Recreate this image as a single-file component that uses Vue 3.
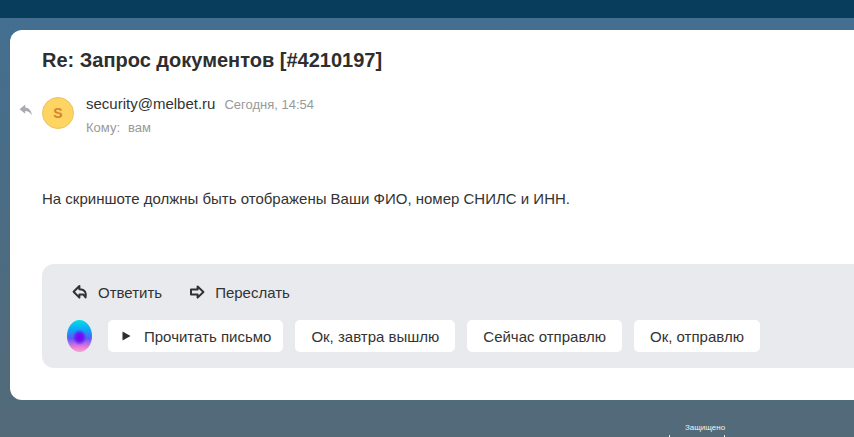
<template>
  <div class="page">
    <div class="topbar"></div>
    <main class="content">
      <section class="letter">
        <h1 class="subject">Re: Запрос документов [#4210197]</h1>

        <div class="meta">
          <svg class="replied" width="14" height="12" viewBox="0 0 14 12">
            <path d="M6.2 0.6 L0.6 5.2 L6.2 9.8 V7 C9 7 11 8 12.8 11.2 C12.6 7 10.2 3.6 6.2 3.4 Z" fill="#a9abb0" />
          </svg>
          <div class="avatar">S</div>
          <div class="meta-text">
            <div class="from-row">
              <span class="from">security@melbet.ru</span>
              <span class="date">Сегодня, 14:54</span>
            </div>
            <div class="to-row">
              <span>Кому:</span>
              <span>вам</span>
            </div>
          </div>
        </div>

        <p class="body-text">На скриншоте должны быть отображены Ваши ФИО, номер СНИЛС и ИНН.</p>

        <div class="actions">
          <div class="action-row">
            <a class="action">
              <svg width="16" height="16" viewBox="0 0 16 16">
                <path d="M7.4 2 L1.6 7.8 L7.4 13.6 V10.4 H11.2 L13.6 13.4 C14.4 9 13.4 5.4 7.4 5.2 Z" fill="none" stroke="#2f3136" stroke-width="2" stroke-linejoin="round" />
              </svg>
              Ответить
            </a>
            <a class="action">
              <svg width="16" height="16" viewBox="0 0 16 16">
                <path d="M8.6 2.4 L14.4 8 L8.6 13.6 V10.6 H2 V5.4 H8.6 Z" fill="none" stroke="#2f3136" stroke-width="2" stroke-linejoin="round" />
              </svg>
              Переслать
            </a>
          </div>
          <div class="reply-row">
            <div class="assistant"></div>
            <button class="chip chip-play">
              <svg width="9" height="10" viewBox="0 0 9 10"><path d="M0.5 0.5 L8.5 5 L0.5 9.5 Z" fill="#2b2d31" /></svg>
              Прочитать письмо
            </button>
            <button v-for="text in quickReplies" :key="text" class="chip">{{ text }}</button>
          </div>
        </div>
      </section>

      <footer class="protected">
        <div class="protected-box">
          <span>Защищено</span>
          <div class="protected-marks"><i></i><i></i></div>
        </div>
      </footer>
    </main>
  </div>
</template>

<script setup>
const quickReplies = ['Ок, завтра вышлю', 'Сейчас отправлю', 'Ок, отправлю']
</script>

<style>
html, body {
  margin: 0;
  overflow: hidden;
}
</style>

<style scoped>
.page {
  width: 854px;
  height: 437px;
  overflow: hidden;
  font-family: "Liberation Sans", Arial, sans-serif;
  background: #4f6a80;
}

.topbar {
  height: 18px;
  background: #083e5c;
}

.content {
  height: 419px;
  padding: 12px 0 0 10px;
  box-sizing: border-box;
  background: linear-gradient(180deg, #446f90 0%, #4d6b80 60%, #536a79 100%);
}

.letter {
  width: 880px;
  height: 370px;
  box-sizing: border-box;
  padding: 18px 0 0 32px;
  background: #fff;
  border-radius: 12px;
}

.subject {
  margin: 0;
  font-size: 20px;
  line-height: 24px;
  font-weight: 700;
  color: #2e2e2e;
}

.meta {
  display: flex;
  align-items: flex-start;
  margin: 22px 0 0 -23px;
}

.replied {
  margin: 10px 9px 0 0;
}

.avatar {
  width: 32px;
  height: 32px;
  margin-top: 3px;
  border-radius: 50%;
  box-sizing: border-box;
  border: 1px solid #eec25e;
  background: #fed462;
  color: #d5832d;
  font-size: 14px;
  font-weight: 700;
  line-height: 30px;
  text-align: center;
}

.meta-text {
  margin-left: 12px;
}

.from-row {
  display: flex;
  align-items: baseline;
  gap: 9px;
  height: 20px;
  line-height: 20px;
}

.from {
  font-size: 15px;
  color: #333;
}

.date {
  font-size: 13px;
  color: #999;
}

.to-row {
  display: flex;
  gap: 8px;
  margin-top: 6px;
  font-size: 13px;
  line-height: 16px;
  color: #999;
}

.body-text {
  margin: 53px 0 0;
  font-size: 15px;
  line-height: 20px;
  color: #333;
}

.actions {
  width: 840px;
  height: 104px;
  box-sizing: border-box;
  margin-top: 55px;
  padding: 18px 0 0 25px;
  background: #e9eaee;
  border-radius: 12px;
}

.action-row {
  display: flex;
  gap: 27px;
  margin-left: 5px;
  height: 20px;
}

.action {
  display: flex;
  align-items: center;
  gap: 10px;
  font-size: 15px;
  color: #333;
}

.reply-row {
  display: flex;
  align-items: center;
  gap: 12px;
  margin-top: 18px;
}

.assistant {
  width: 25px;
  height: 32px;
  margin-right: 4px;
  border-radius: 50%;
  background:
    radial-gradient(ellipse 7px 8px at 50% 54%, #7500f5 0%, rgba(117, 0, 245, 0.8) 50%, rgba(117, 0, 245, 0) 100%),
    linear-gradient(180deg, #05dde8 0%, #0aa8f8 30%, #5a5cf8 58%, #f07ad6 85%, #f4a6d8 100%);
}

.chip {
  height: 32px;
  padding: 0 16px;
  border: 0;
  border-radius: 5px;
  background: #fff;
  font-family: inherit;
  font-size: 15px;
  color: #333;
}

.chip-play {
  display: flex;
  align-items: center;
  gap: 13px;
  padding: 0 12px 0 14px;
}

.protected {
  display: flex;
  justify-content: flex-end;
  padding-right: 129px;
}

.protected-box {
  width: 40px;
  margin-top: 23px;
  text-align: center;
  color: #f0f3f5;
  font-size: 8px;
  line-height: 9px;
}

.protected-marks {
  display: flex;
  justify-content: space-between;
  margin: 3px 0 0 -16px;
  height: 4px;
}

.protected-marks i {
  width: 1px;
  height: 4px;
  background: #e8edf0;
}
</style>
